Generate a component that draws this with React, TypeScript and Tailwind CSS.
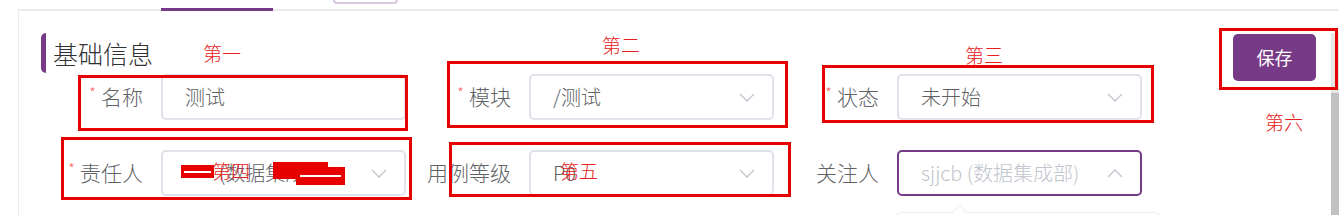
const FONT = "font-['Noto_Sans_CJK_SC','Noto_Sans',sans-serif]";

function Chevron({ up }: { up?: boolean }) {
  return (
    <svg width="16" height="9" viewBox="0 0 16 9" className="shrink-0 text-[#c0c4cc]">
      <polyline
        points={up ? "1,8 8,1 15,8" : "1,1 8,8 15,1"}
        fill="none"
        stroke="currentColor"
        strokeWidth="1.3"
      />
    </svg>
  );
}

function Label({ text, required }: { text: string; required?: boolean }) {
  return (
    <div className="w-[115px] shrink-0 flex items-center justify-end pr-[18px] text-[21px] text-[#606266] font-light">
      {required && <span className="text-[#f56c6c] text-[15px] mr-[5px] -mt-[8px]">*</span>}
      {text}
    </div>
  );
}

function Field({
  children,
  select,
  open,
  placeholder,
}: {
  children?: React.ReactNode;
  select?: boolean;
  open?: boolean;
  placeholder?: boolean;
}) {
  return (
    <div
      className={`relative w-[245px] h-[46px] shrink-0 rounded-[5px] border-[2px] flex items-center pl-[22px] pr-[17px] text-[20px] font-light ${
        open ? "border-[#763a86]" : "border-[#dfe2e8]"
      } ${placeholder ? "text-[#c0c4cc]" : "text-[#606266]"}`}
    >
      <div className="flex-1 min-w-0 whitespace-nowrap overflow-hidden">{children}</div>
      {select && <Chevron up={open} />}
    </div>
  );
}

function Item({ children }: { children: React.ReactNode }) {
  return <div className="flex items-center w-[360px]">{children}</div>;
}

// red annotation boxes drawn on top of the screenshot
const boxes = [
  "left-[78px] top-[75px] w-[330px] h-[56px]",
  "left-[61px] top-[137px] w-[351px] h-[63px]",
  "left-[447px] top-[61px] w-[341px] h-[67px]",
  "left-[449px] top-[142px] w-[342px] h-[55px]",
  "left-[822px] top-[65px] w-[332px] h-[58px]",
  "left-[1219px] top-[28px] w-[119px] h-[62px]",
];

const notes: [string, string][] = [
  ["第一", "left-[203px] top-[43px]"],
  ["第二", "left-[602px] top-[35px]"],
  ["第三", "left-[965px] top-[45px]"],
  ["第四", "left-[212px] top-[161px]"],
  ["第五", "left-[560px] top-[161px]"],
  ["第六", "left-[1265px] top-[112px]"],
];

export default function App() {
  return (
    <div className={`relative w-[1339px] h-[215px] overflow-hidden bg-white ${FONT}`}>
      {/* tab strip */}
      <div className="ml-[18px] h-[11px] border-b-[2px] border-[#ebebef] flex items-end">
        <div className="ml-[143px] w-[112px] h-[3px] bg-[#763a86] -mb-[2px]" />
        <div className="ml-[60px] self-start w-[65px] h-[4px] border-[2px] border-t-0 border-[#d9c8de] rounded-b-[4px]" />
      </div>

      <div className="flex h-[204px]">
        <div className="ml-[18px] border-l border-[#ebebef] pl-[22px] pt-[22px]">
          <div className="flex items-center h-[40px]">
            <div className="w-[5px] h-[40px] bg-[#763a86] rounded-l-[5px]" />
            <div className="ml-[7px] text-[25px] text-[#303133] leading-none font-light">基础信息</div>
          </div>

          <div className="ml-[5px] mt-[1px] grid grid-cols-[360px_360px_360px] gap-x-[8px] gap-y-[30px]">
            <Item>
              <Label text="名称" required />
              <Field>测试</Field>
            </Item>
            <Item>
              <Label text="模块" required />
              <Field select>/测试</Field>
            </Item>
            <Item>
              <Label text="状态" required />
              <Field select>未开始</Field>
            </Item>
            <Item>
              <Label text="责任人" required />
              <Field select>
                <span className="ml-[34px]">(数据集成部)</span>
              </Field>
            </Item>
            <Item>
              <Label text="用例等级" />
              <Field select>P0</Field>
            </Item>
            <Item>
              <div className="relative flex items-center">
                <Label text="关注人" />
                <Field select open placeholder>
                  sjjcb (数据集成部)
                </Field>
                <div className="absolute left-[115px] top-[62px] w-[262px] h-[40px] bg-white border border-[#eceef2] rounded-[4px] shadow-[0_2px_10px_rgba(0,0,0,0.06)]">
                  <div className="absolute -top-[6px] left-[56px] w-[11px] h-[11px] rotate-45 bg-white border-l border-t border-[#eceef2]" />
                </div>
              </div>
            </Item>
          </div>
        </div>

        <div className="ml-auto mt-[23px] mr-[15px]">
          <button className="w-[83px] h-[47px] rounded-[5px] bg-[#763a86] text-white text-[18px]">保存</button>
        </div>
        <div className="w-[8px] mt-[22px] flex flex-col">
          <div className="h-[60px] bg-[#e6e6e6]" />
          <div className="flex-1 bg-[#c1c1c1]" />
        </div>
      </div>

      {/* redaction blocks over 责任人 */}
      <div className="absolute left-[181px] top-[165px] w-[33px] h-[13px] bg-[#e60000] flex flex-col justify-center px-[3px]">
        <div className="h-[2px] bg-white" />
      </div>
      <div className="absolute left-[273px] top-[162px] w-[55px] h-[17px] bg-[#e60000]" />
      <div className="absolute left-[296px] top-[167px] w-[49px] h-[18px] bg-[#e60000] flex items-center px-[4px]">
        <div className="h-[2px] w-full bg-white" />
      </div>

      {boxes.map((b, i) => (
        <div key={i} className={`absolute ${b} border-[3px] border-[#e60000]`} />
      ))}
      {notes.map(([t, pos]) => (
        <div key={t} className={`absolute ${pos} text-[19px] leading-none text-[#e62020] font-light`}>
          {t}
        </div>
      ))}
    </div>
  );
}
